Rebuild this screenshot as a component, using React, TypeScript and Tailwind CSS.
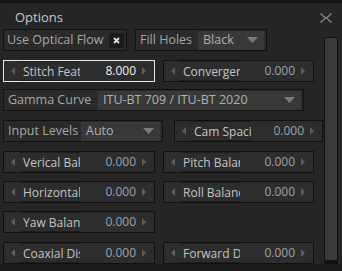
import React from 'react';

const font = { fontFamily: '"Open Sans", "Noto Sans", sans-serif' };

function Tri() {
  return (
    <svg width="11" height="6" viewBox="0 0 11 6" className="shrink-0">
      <path d="M0 0 H11 L5.5 6 Z" fill="#7a7a7a" />
    </svg>
  );
}

function Arrow({ dir }: { dir: 'l' | 'r' }) {
  return (
    <svg width="4" height="8" viewBox="0 0 4 8" className="shrink-0">
      {dir === 'l' ? <path d="M4 0 V8 L0 4 Z" fill="#5e5e5e" /> : <path d="M0 0 V8 L4 4 Z" fill="#5e5e5e" />}
    </svg>
  );
}

// numeric slider field: arrow, clipped label, value, arrow
function Slider({ label, value, w, focused }: { label: string; value: string; w: string; focused?: boolean }) {
  return (
    <div
      className={`${w} h-[22px] flex items-center bg-[#2d2d2d] border ${focused ? 'border-[#e8e8e8]' : 'border-[#101010]'}`}
    >
      <div className="w-[16px] flex justify-center pl-[2px]">
        <Arrow dir="l" />
      </div>
      <div className="w-[60px] h-full overflow-hidden whitespace-nowrap border-y border-[#1e1e1e] text-[12px] leading-[19px] text-[#c4c4c4] pl-[3px]">
        {label}
      </div>
      <div className={`flex-1 text-right text-[12px] pr-[6px] ${focused ? 'text-[#f0f0f0]' : 'text-[#98a3b4]'}`}>{value}</div>
      <div className="w-[12px] flex justify-start">
        <Arrow dir="r" />
      </div>
    </div>
  );
}

function Select({ value, w }: { value: string; w: string }) {
  return (
    <div className={`${w} h-[19px] flex items-center justify-between bg-[#383838] pl-[5px] pr-[6px] text-[12.5px] text-[#b0b0b0]`}>
      <span>{value}</span>
      <Tri />
    </div>
  );
}

export default function App() {
  return (
    <div className="w-[342px] h-[271px] bg-[#1c1c1c] overflow-hidden flex flex-col" style={font}>
      <div className="h-[3px] bg-[#141414]" />
      <div className="h-[261px] bg-[#252525] flex">
        <div className="flex-1 flex flex-col">
          {/* title */}
          <div className="h-[34px] flex items-start justify-between">
            <span className="pl-[15px] pt-[5px] text-[13px] text-[#c8c8c8]">Options</span>
            <svg width="12" height="10" viewBox="0 0 12 10" className="mt-[10px] mr-[-8px] relative z-10">
              <path d="M0.5 0.5 L5.5 5 L0.5 9.5 M11.5 0.5 L6.5 5 L11.5 9.5" stroke="#8a8a8a" strokeWidth="1.3" fill="none" />
            </svg>
          </div>

          {/* row 1 */}
          <div className="flex gap-[8px] pl-[3px]">
            <div className="w-[124px] h-[22px] flex items-center justify-between border border-[#111] bg-[#2a2a2a] pl-[3px] pr-[2px]">
              <span className="text-[12.5px] text-[#a6a6a6]">Use Optical Flow</span>
              <div className="w-[15px] h-[15px] bg-[#1b1b1b] flex items-center justify-center">
                <svg width="7" height="7" viewBox="0 0 7 7">
                  <path d="M1 1 L6 6 M6 1 L1 6" stroke="#e0e0e0" strokeWidth="1.8" />
                </svg>
              </div>
            </div>
            <div className="w-[132px] h-[22px] flex items-center justify-between border border-[#111] bg-[#2a2a2a] pl-[4px] pr-[2px]">
              <span className="text-[12.5px] text-[#a6a6a6]">Fill Holes</span>
              <Select value="Black" w="w-[66px]" />
            </div>
          </div>

          {/* row 2 */}
          <div className="flex gap-[8px] pl-[3px] mt-[9px]">
            <Slider label="Stitch Feathering" value="8.000" w="w-[152px]" focused />
            <Slider label="Convergence" value="0.000" w="w-[151px]" />
          </div>

          {/* row 3 */}
          <div className="flex pl-[3px] mt-[7px]">
            <div className="w-[301px] h-[22px] flex items-center justify-between border border-[#111] bg-[#2a2a2a] pl-[4px] pr-[2px]">
              <span className="text-[12.5px] text-[#a6a6a6]">Gamma Curve</span>
              <Select value="ITU-BT 709 / ITU-BT 2020" w="w-[203px]" />
            </div>
          </div>

          {/* row 4 */}
          <div className="flex gap-[11px] pl-[3px] mt-[9px]">
            <div className="w-[160px] h-[22px] flex items-center justify-between border border-[#111] bg-[#2a2a2a] pl-[4px] pr-[2px]">
              <span className="text-[12.5px] text-[#a6a6a6]">Input Levels</span>
              <Select value="Auto" w="w-[79px]" />
            </div>
            <Slider label="Cam Spacing" value="0.000" w="w-[149px]" />
          </div>

          {/* row 5 */}
          <div className="flex gap-[8px] pl-[3px] mt-[9px]">
            <Slider label="Verical Balance" value="0.000" w="w-[152px]" />
            <Slider label="Pitch Balance" value="0.000" w="w-[151px]" />
          </div>

          {/* row 6 */}
          <div className="flex gap-[8px] pl-[3px] mt-[8px]">
            <Slider label="Horizontal Balance" value="0.000" w="w-[152px]" />
            <Slider label="Roll Balance" value="0.000" w="w-[151px]" />
          </div>

          {/* row 7 */}
          <div className="flex gap-[8px] pl-[3px] mt-[8px]">
            <Slider label="Yaw Balance" value="0.000" w="w-[152px]" />
          </div>

          {/* row 8 */}
          <div className="flex gap-[8px] pl-[3px] mt-[9px]">
            <Slider label="Coaxial Distance" value="0.000" w="w-[152px]" />
            <Slider label="Forward Distance" value="0.000" w="w-[151px]" />
          </div>
        </div>

        {/* scrollbar */}
        <div className="w-[18px] pt-[34px] pr-[4px]">
          <div className="w-[14px] h-[227px] border border-[#111] bg-[#111] flex flex-col">
            <div className="flex-1 bg-[#3a3a3a]" />
            <div className="h-[3px]" />
          </div>
        </div>
      </div>
    </div>
  );
}
